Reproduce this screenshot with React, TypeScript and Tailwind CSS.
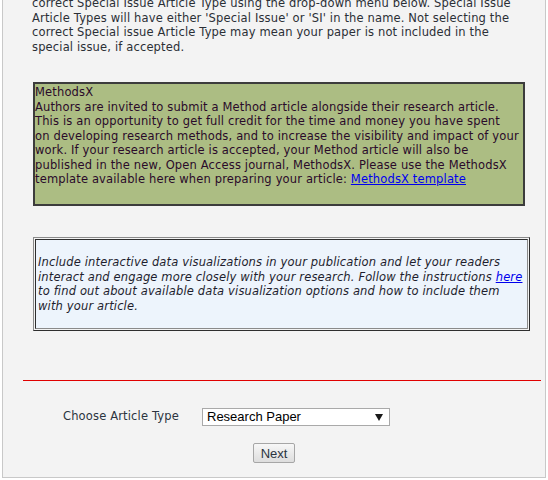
export default function App() {
  const body = { fontFamily: '"DejaVu Sans", Verdana, sans-serif' }
  const arial = { fontFamily: '"Liberation Sans", Arial, sans-serif' }

  return (
    <div className="bg-white min-h-[480px]">
      <div className="mx-[2px] border-x border-b border-[#c8c8c8] bg-[#f3f3f3] pb-[14px]" style={body}>
        <p className="-mt-[4px] pl-[29px] text-[11.5px] tracking-[0.15px] leading-[14.5px] text-[#2b2f36] whitespace-nowrap">
          correct Special Issue Article Type using the drop-down menu below. Special Issue
          <br />
          Article Types will have either 'Special Issue' or 'SI' in the name. Not selecting the
          <br />
          correct Special issue Article Type may mean your paper is not included in the
          <br />
          special issue, if accepted.
        </p>

        <div className="ml-[30px] mt-[28px] w-[492px] h-[124px] border-2 border-[#3c3c3c] bg-[#acbd83] pt-px text-[11.5px] tracking-[0.15px] leading-[14.5px] text-[#2a0a2a] whitespace-nowrap">
          MethodsX
          <br />
          Authors are invited to submit a Method article alongside their research article.
          <br />
          This is an opportunity to get full credit for the time and money you have spent
          <br />
          on developing research methods, and to increase the visibility and impact of your
          <br />
          work. If your research article is accepted, your Method article will also be
          <br />
          published in the new, Open Access journal, MethodsX. Please use the MethodsX
          <br />
          template available here when preparing your article:{" "}
          <a href="#" className="text-[#0000ee] underline">
            MethodsX template
          </a>
        </div>

        <div className="ml-[30px] mt-[31px] w-[497px] h-[94px] border border-t-[#8a8a8a] border-l-[#8a8a8a] border-b-[#2e2e2e] border-r-[#2e2e2e] p-px">
          <div className="h-full flex items-center border border-t-[#2e2e2e] border-l-[#2e2e2e] border-b-[#8a8a8a] border-r-[#8a8a8a] bg-[#edf4fc] pl-[2px]">
            <p className="italic text-[11.5px] tracking-[0.15px] leading-[14.5px] text-[#1e1e2e] whitespace-nowrap">
              Include interactive data visualizations in your publication and let your readers
              <br />
              interact and engage more closely with your research. Follow the instructions{" "}
              <a href="#" className="text-[#0000ee] underline">
                here
              </a>
              <br />
              to find out about available data visualization options and how to include them
              <br />
              with your article.
            </p>
          </div>
        </div>

        <div className="ml-[20px] mt-[49px] w-[518px] border-t border-[#e00000]" />

        <div className="mt-[27px] flex items-center">
          <span className="ml-[60px] w-[139px] text-[11.5px] tracking-[0.15px] text-[#2b3440]">Choose Article Type</span>
          <div
            className="w-[188px] h-[18px] border border-[#a9a9a9] bg-white flex items-center justify-between pl-[4px] pr-[6px] text-[13px] text-black"
            style={arial}
          >
            <span>Research Paper</span>
            <svg width="8" height="7" viewBox="0 0 8 7">
              <polygon points="0,0 8,0 4,7" fill="#1a1a1a" />
            </svg>
          </div>
        </div>

        <div className="mt-[17px] flex justify-center">
          <button
            className="w-[42px] h-[20px] border border-[#a6a6a6] rounded-[2px] bg-gradient-to-b from-[#f7f7f7] to-[#dddddd] text-[13px] text-[#2b3440] leading-none"
            style={arial}
          >
            Next
          </button>
        </div>
      </div>
    </div>
  )
}
